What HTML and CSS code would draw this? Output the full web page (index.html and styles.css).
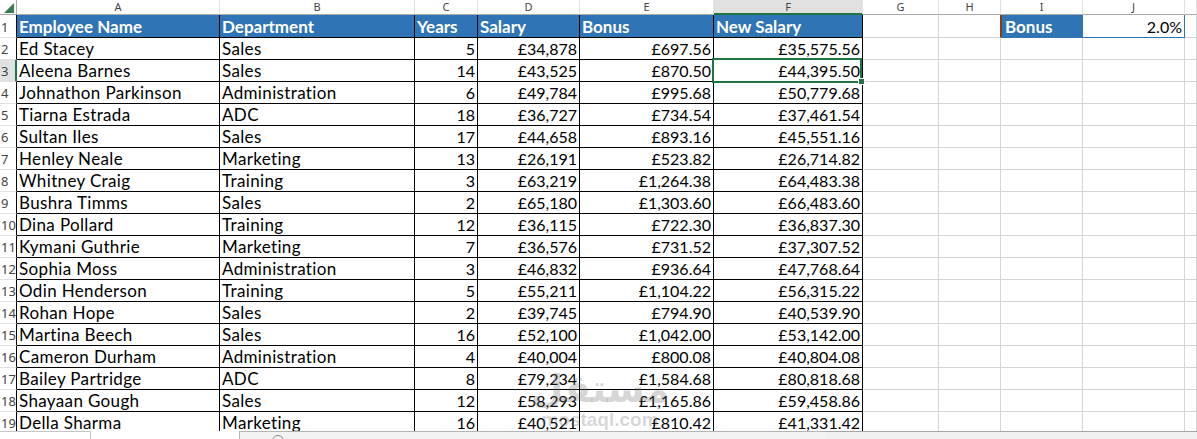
FILE: index.html
```html
<!DOCTYPE html>
<html>
<head>
<meta charset="utf-8">
<link rel="stylesheet" href="styles.css">
</head>
<body>
<div class="app">
<div class="sheet">
  <div class="corner"><svg width="16" height="15" viewBox="0 0 16 15"><polygon points="14,3 14,13 4,13" fill="#3d7a52"/></svg></div>
  <div class="ch">A</div><div class="ch">B</div><div class="ch">C</div><div class="ch">D</div><div class="ch">E</div><div class="ch sel">F</div><div class="ch">G</div><div class="ch">H</div><div class="ch">I</div><div class="ch">J</div><div class="ch last"></div>

  <div class="rh">1</div><div class="c h">Employee Name</div><div class="c h">Department</div><div class="c h">Years</div><div class="c h">Salary</div><div class="c h">Bonus</div><div class="c h">New Salary</div><div class="g"></div><div class="g brown"></div><div class="g bonus">Bonus</div><div class="g rate">2.0%</div><div class="g"></div>

  <div class="rh">2</div><div class="c">Ed Stacey</div><div class="c">Sales</div><div class="c n">5</div><div class="c n">£34,878</div><div class="c n">£697.56</div><div class="c n">£35,575.56</div><div class="g"></div><div class="g"></div><div class="g"></div><div class="g"></div><div class="g"></div>

  <div class="rh act">3</div><div class="c">Aleena Barnes</div><div class="c">Sales</div><div class="c n">14</div><div class="c n">£43,525</div><div class="c n">£870.50</div><div class="c n">£44,395.50</div><div class="g"></div><div class="g"></div><div class="g"></div><div class="g"></div><div class="g"></div>

  <div class="rh">4</div><div class="c">Johnathon Parkinson</div><div class="c">Administration</div><div class="c n">6</div><div class="c n">£49,784</div><div class="c n">£995.68</div><div class="c n">£50,779.68</div><div class="g"></div><div class="g"></div><div class="g"></div><div class="g"></div><div class="g"></div>

  <div class="rh">5</div><div class="c">Tiarna Estrada</div><div class="c">ADC</div><div class="c n">18</div><div class="c n">£36,727</div><div class="c n">£734.54</div><div class="c n">£37,461.54</div><div class="g"></div><div class="g"></div><div class="g"></div><div class="g"></div><div class="g"></div>

  <div class="rh">6</div><div class="c">Sultan Iles</div><div class="c">Sales</div><div class="c n">17</div><div class="c n">£44,658</div><div class="c n">£893.16</div><div class="c n">£45,551.16</div><div class="g"></div><div class="g"></div><div class="g"></div><div class="g"></div><div class="g"></div>

  <div class="rh">7</div><div class="c">Henley Neale</div><div class="c">Marketing</div><div class="c n">13</div><div class="c n">£26,191</div><div class="c n">£523.82</div><div class="c n">£26,714.82</div><div class="g"></div><div class="g"></div><div class="g"></div><div class="g"></div><div class="g"></div>

  <div class="rh">8</div><div class="c">Whitney Craig</div><div class="c">Training</div><div class="c n">3</div><div class="c n">£63,219</div><div class="c n">£1,264.38</div><div class="c n">£64,483.38</div><div class="g"></div><div class="g"></div><div class="g"></div><div class="g"></div><div class="g"></div>

  <div class="rh">9</div><div class="c">Bushra Timms</div><div class="c">Sales</div><div class="c n">2</div><div class="c n">£65,180</div><div class="c n">£1,303.60</div><div class="c n">£66,483.60</div><div class="g"></div><div class="g"></div><div class="g"></div><div class="g"></div><div class="g"></div>

  <div class="rh">10</div><div class="c">Dina Pollard</div><div class="c">Training</div><div class="c n">12</div><div class="c n">£36,115</div><div class="c n">£722.30</div><div class="c n">£36,837.30</div><div class="g"></div><div class="g"></div><div class="g"></div><div class="g"></div><div class="g"></div>

  <div class="rh">11</div><div class="c">Kymani Guthrie</div><div class="c">Marketing</div><div class="c n">7</div><div class="c n">£36,576</div><div class="c n">£731.52</div><div class="c n">£37,307.52</div><div class="g"></div><div class="g"></div><div class="g"></div><div class="g"></div><div class="g"></div>

  <div class="rh">12</div><div class="c">Sophia Moss</div><div class="c">Administration</div><div class="c n">3</div><div class="c n">£46,832</div><div class="c n">£936.64</div><div class="c n">£47,768.64</div><div class="g"></div><div class="g"></div><div class="g"></div><div class="g"></div><div class="g"></div>

  <div class="rh">13</div><div class="c">Odin Henderson</div><div class="c">Training</div><div class="c n">5</div><div class="c n">£55,211</div><div class="c n">£1,104.22</div><div class="c n">£56,315.22</div><div class="g"></div><div class="g"></div><div class="g"></div><div class="g"></div><div class="g"></div>

  <div class="rh">14</div><div class="c">Rohan Hope</div><div class="c">Sales</div><div class="c n">2</div><div class="c n">£39,745</div><div class="c n">£794.90</div><div class="c n">£40,539.90</div><div class="g"></div><div class="g"></div><div class="g"></div><div class="g"></div><div class="g"></div>

  <div class="rh">15</div><div class="c">Martina Beech</div><div class="c">Sales</div><div class="c n">16</div><div class="c n">£52,100</div><div class="c n">£1,042.00</div><div class="c n">£53,142.00</div><div class="g"></div><div class="g"></div><div class="g"></div><div class="g"></div><div class="g"></div>

  <div class="rh">16</div><div class="c">Cameron Durham</div><div class="c">Administration</div><div class="c n">4</div><div class="c n">£40,004</div><div class="c n">£800.08</div><div class="c n">£40,804.08</div><div class="g"></div><div class="g"></div><div class="g"></div><div class="g"></div><div class="g"></div>

  <div class="rh">17</div><div class="c">Bailey Partridge</div><div class="c">ADC</div><div class="c n">8</div><div class="c n">£79,234</div><div class="c n">£1,584.68</div><div class="c n">£80,818.68</div><div class="g"></div><div class="g"></div><div class="g"></div><div class="g"></div><div class="g"></div>

  <div class="rh">18</div><div class="c">Shayaan Gough</div><div class="c">Sales</div><div class="c n">12</div><div class="c n">£58,293</div><div class="c n">£1,165.86</div><div class="c n">£59,458.86</div><div class="g"></div><div class="g"></div><div class="g"></div><div class="g"></div><div class="g"></div>

  <div class="rh">19</div><div class="c">Della Sharma</div><div class="c">Marketing</div><div class="c n">16</div><div class="c n">£40,521</div><div class="c n">£810.42</div><div class="c n">£41,331.42</div><div class="g"></div><div class="g"></div><div class="g"></div><div class="g"></div><div class="g"></div>

  <div class="selbox"></div>
  <div class="handle"></div>
  <div class="wm"><div class="wm-ar">مستقل</div><div class="wm-en">mostaql.com</div></div>
</div>
<div class="bottom">
  <div class="nav"></div>
  <div class="tabs"></div>
  <div class="track"><span class="plus"></span></div>
  <div class="hscroll"></div>
</div>
</div>
</body>
</html>
```
FILE: styles.css
```css
* { box-sizing: border-box; }
html, body { margin: 0; padding: 0; background: #fff; }
.app { width: 1197px; height: 439px; overflow: hidden; display: flex; flex-direction: column; }
.sheet {
  position: relative;
  height: 431px;
  overflow: hidden;
  display: grid;
  grid-template-columns: 17px 203px 195px 63px 102px 134px 149px 76px 62px 82px 102px 1fr;
  grid-template-rows: 15px 23px;
  grid-auto-rows: 22px;
  font-family: Lato, "Liberation Sans", sans-serif;
  font-size: 17px;
  letter-spacing: 0.35px;
  color: #000;
}
.corner { border-right: 1px solid #ababab; border-bottom: 1px solid #ababab; }
.corner svg { display: block; }
.ch {
  border-right: 1px solid #e1e1e1;
  border-bottom: 1px solid #ababab;
  font-family: "Noto Sans", sans-serif;
  font-size: 11px;
  line-height: 14px;
  letter-spacing: 0;
  color: #444;
  text-align: center;
}
.ch.sel { background: #e1e1e1; border-bottom: 2px solid #217346; }
.rh {
  border-right: 1px solid #000;
  border-bottom: 1px solid #e1e1e1;
  font-family: "Noto Sans", sans-serif;
  font-size: 13px;
  letter-spacing: 0;
  color: #444;
  display: flex;
  justify-content: flex-start;
  align-items: flex-end;
  padding: 0 0 1px 1px;
  overflow: hidden;
  white-space: nowrap;
}
.rh.act { background: #e1e1e1; border-right: 2px solid #217346; }
.c, .g {
  border-right: 1px solid #000;
  border-bottom: 1px solid #000;
  padding: 0 2px 0 2px;
  white-space: nowrap;
  overflow: hidden;
  display: flex;
  align-items: flex-end;
  line-height: 20px;
}
.g { border-right-color: #d4d4d4; border-bottom-color: #d4d4d4; }
.n { justify-content: flex-end; padding-right: 2px; font-size: 16px; letter-spacing: 0; }
.h { background: #2f75b5; color: #fff; font-weight: bold; letter-spacing: 0; }
.brown { border-right: 1px solid #8a3a0e; }
.bonus {
  background: #2f75b5; color: #fff; font-weight: bold; letter-spacing: 0;
  box-shadow: inset 1px 0 0 #8a3a0e;
  border-right-color: #2f75b5; border-bottom-color: #2f75b5;
  padding-left: 4px;
}
.rate { justify-content: flex-end; font-size: 16px; letter-spacing: 0; border-right-color: #2f75b5; border-bottom-color: #2f75b5; }
.selbox {
  position: absolute; left: 712px; top: 58px; width: 150px; height: 25px;
  border: 2px solid #217346;
}
.handle {
  position: absolute; left: 858px; top: 78px; width: 7px; height: 7px;
  background: #217346; border: 1px solid #fff;
}
.wm { position: absolute; left: 530px; top: 368px; width: 140px; text-align: center; color: rgba(110,110,110,0.28); letter-spacing: 0; pointer-events: none; }
.wm-ar { font-family: "DejaVu Sans", sans-serif; font-weight: bold; font-size: 38px; line-height: 42px; }
.wm-en { font-family: "Liberation Sans", sans-serif; font-weight: bold; font-size: 19px; line-height: 20px; }
.bottom { flex: 1; display: flex; background: #fff; }
.nav { width: 91px; border-top: 1px solid #c6c6c6; border-right: 1px solid #c6c6c6; }
.tabs { width: 148px; }
.track { width: 587px; border-top: 1px solid #b5b5b5; border-left: 1px solid #b5b5b5; background: #f3f3f3; position: relative; }
.plus { position: absolute; left: 32px; top: 3px; width: 12px; height: 12px; border: 1px solid #8a8a8a; border-radius: 50%; }
.hscroll { flex: 1; border-top: 1px solid #a6a6a6; background: #f0f0f0; }
```
